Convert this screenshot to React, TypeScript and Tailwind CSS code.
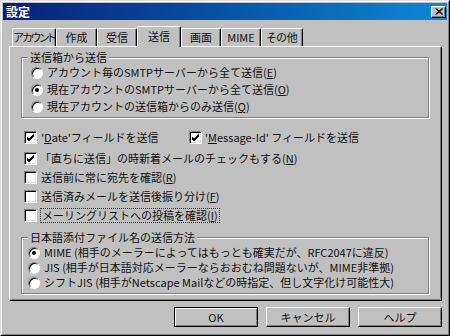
import { ReactElement, ReactNode } from 'react';

const font = { fontFamily: '"Noto Sans CJK JP", "Noto Sans", sans-serif' };

const tabs = [
  { label: 'アカウント', w: 'w-[44px] tracking-[-1.5px]' },
  { label: '作成', w: 'w-[41px]' },
  { label: '受信', w: 'w-[40px]' },
  { label: '送信', w: 'w-[44px]', active: true },
  { label: '画面', w: 'w-[40px]' },
  { label: 'MIME', w: 'w-[40px]' },
  { label: 'その他', w: 'w-[42px]' },
];

const Key = ({ children }: { children: ReactNode }) => <span className="underline">{children}</span>;

const Radio = ({ checked }: { checked?: boolean }) => (
  <span className="relative flex h-[12px] w-[12px] shrink-0 items-center justify-center rounded-full border border-t-[#808080] border-l-[#808080] border-r-white border-b-white bg-white shadow-[inset_1px_1px_0_#000]">
    {checked && <span className="h-[4px] w-[4px] rounded-full bg-black" />}
  </span>
);

const Check = ({ checked }: { checked?: boolean }) => (
  <span className="flex h-[13px] w-[13px] shrink-0 items-center justify-center border border-t-[#808080] border-l-[#808080] border-r-white border-b-white bg-white shadow-[inset_1px_1px_0_#000,inset_-1px_-1px_0_#dfdfdf]">
    {checked && (
      <svg width="9" height="9" viewBox="0 0 9 9">
        <path d="M1 4 L3 6 L8 1 M1 5 L3 7 L8 2 M1 6 L3 8 L8 3" stroke="#000" strokeWidth="1" fill="none" />
      </svg>
    )}
  </span>
);

const GroupBox = ({ label, className, children }: { label: string; className: string; children: ReactNode }) => (
  <div className={`relative ml-[11px] w-[408px] border border-[#808080] shadow-[inset_1px_1px_0_#fff,1px_1px_0_#fff] ${className}`}>
    <span className="absolute -top-[8px] left-[6px] bg-[#c0c0c0] px-[2px] leading-[14px]">{label}</span>
    {children}
  </div>
);

const Button = ({ children, def }: { children: ReactNode; def?: boolean }) => (
  <button
    className={`h-[20px] w-[84px] bg-[#c0c0c0] text-[11px] leading-none ${
      def
        ? 'border border-black shadow-[inset_1px_1px_0_#fff,inset_-1px_-1px_0_#808080]'
        : 'border border-t-white border-l-white border-r-black border-b-black shadow-[inset_-1px_-1px_0_#808080]'
    }`}
  >
    {children}
  </button>
);

const App = (): ReactElement => {
  return (
    <div style={font} className="h-[336px] w-[450px] border border-t-[#dfdfdf] border-l-[#dfdfdf] border-r-black border-b-black bg-[#c0c0c0] text-[11px] text-[#111]">
      <div className="flex h-full flex-col border border-t-white border-l-white border-r-[#808080] border-b-[#808080]">
        {/* title bar */}
        <div className="m-[1px] flex h-[17px] items-center justify-between bg-gradient-to-r from-[#0a1f78] to-[#1088d6] pl-[3px] pr-[1px]">
          <span className="text-[12px] font-bold leading-none text-white">設定</span>
          <span className="flex h-[12px] w-[15px] items-center justify-center border border-t-white border-l-white border-r-black border-b-black bg-[#c0c0c0] shadow-[inset_-1px_-1px_0_#808080]">
            <svg width="8" height="7" viewBox="0 0 8 7">
              <path d="M0.5 0.5 L7 6.5 M1.5 0.5 L8 6.5 M7 0.5 L0.5 6.5 M8 0.5 L1.5 6.5" stroke="#000" strokeWidth="1" />
            </svg>
          </span>
        </div>

        {/* tabs */}
        <div className="ml-[7px] mt-[5px] flex items-end pl-[3px]">
          {tabs.map((t) => (
            <div
              key={t.label}
              className={`flex items-center justify-center overflow-hidden whitespace-nowrap rounded-t-[2px] border-t border-l border-t-white border-l-white border-r border-r-black bg-[#c0c0c0] shadow-[inset_-1px_0_0_#808080] [font-feature-settings:'palt'] ${t.w} ${
                t.active ? 'relative z-10 -mb-[1px] h-[21px] pb-[2px]' : 'h-[18px]'
              }`}
            >
              {t.label}
            </div>
          ))}
        </div>

        {/* panel */}
        <div className="ml-[7px] flex h-[255px] w-[433px] flex-col border border-t-white border-l-white border-r-black border-b-black shadow-[inset_-1px_-1px_0_#808080]">
          <GroupBox label="送信箱から送信" className="mt-[10px] pb-[2px] pl-[9px] pt-[6px]">
            {[
              <>アカウント毎のSMTPサーバーから全て送信(<Key>E</Key>)</>,
              <>現在アカウントのSMTPサーバーから全て送信(<Key>O</Key>)</>,
              <>現在アカウントの送信箱からのみ送信(<Key>Q</Key>)</>,
            ].map((label, i) => (
              <div key={i} className="flex h-[17px] items-center gap-[4px]">
                <Radio checked={i === 1} />
                <span>{label}</span>
              </div>
            ))}
          </GroupBox>

          <div className="ml-[14px] mt-[10px] flex flex-col">
            <div className="flex h-[19px] items-center">
              <div className="flex w-[165px] items-center gap-[4px]">
                <Check checked />
                <span>'<Key>D</Key>ate'フィールドを送信</span>
              </div>
              <div className="flex items-center gap-[3px]">
                <Check checked />
                <span>'<Key>M</Key>essage-Id' フィールドを送信</span>
              </div>
            </div>
            <div className="mt-[2px] flex h-[19px] items-center gap-[3px]">
              <Check checked />
              <span>「直ちに送信」の時新着メールのチェックもする(<Key>N</Key>)</span>
            </div>
            <div className="flex h-[19px] items-center gap-[4px]">
              <Check />
              <span>送信前に常に宛先を確認(<Key>R</Key>)</span>
            </div>
            <div className="flex h-[19px] items-center gap-[4px]">
              <Check />
              <span>送信済みメールを送信後振り分け(<Key>F</Key>)</span>
            </div>
            <div className="flex h-[19px] items-center gap-[3px]">
              <Check />
              <span className="border border-dotted border-[#333] px-[1px] leading-[13px]">
                メーリングリストへの投稿を確認(<Key>I</Key>)
              </span>
            </div>
          </div>

          <GroupBox label="日本語添付ファイル名の送信方法" className="mt-[12px] pb-[3px] pl-[6px] pt-[7px]">
            {[
              'MIME (相手のメーラーによってはもっとも確実だが、RFC2047に違反)',
              'JIS (相手が日本語対応メーラーならおおむね問題ないが、MIME非準拠)',
              'シフトJIS (相手がNetscape Mailなどの時指定、但し文字化け可能性大)',
            ].map((label, i) => (
              <div key={i} className="flex h-[15px] items-center gap-[4px]">
                <Radio checked={i === 0} />
                <span>{label}</span>
              </div>
            ))}
          </GroupBox>
        </div>

        {/* buttons */}
        <div className="mr-[6px] mt-[6px] flex justify-end gap-[8px]">
          <Button def>OK</Button>
          <Button>キャンセル</Button>
          <Button>ヘルプ</Button>
        </div>
      </div>
    </div>
  );
};

export default App;
